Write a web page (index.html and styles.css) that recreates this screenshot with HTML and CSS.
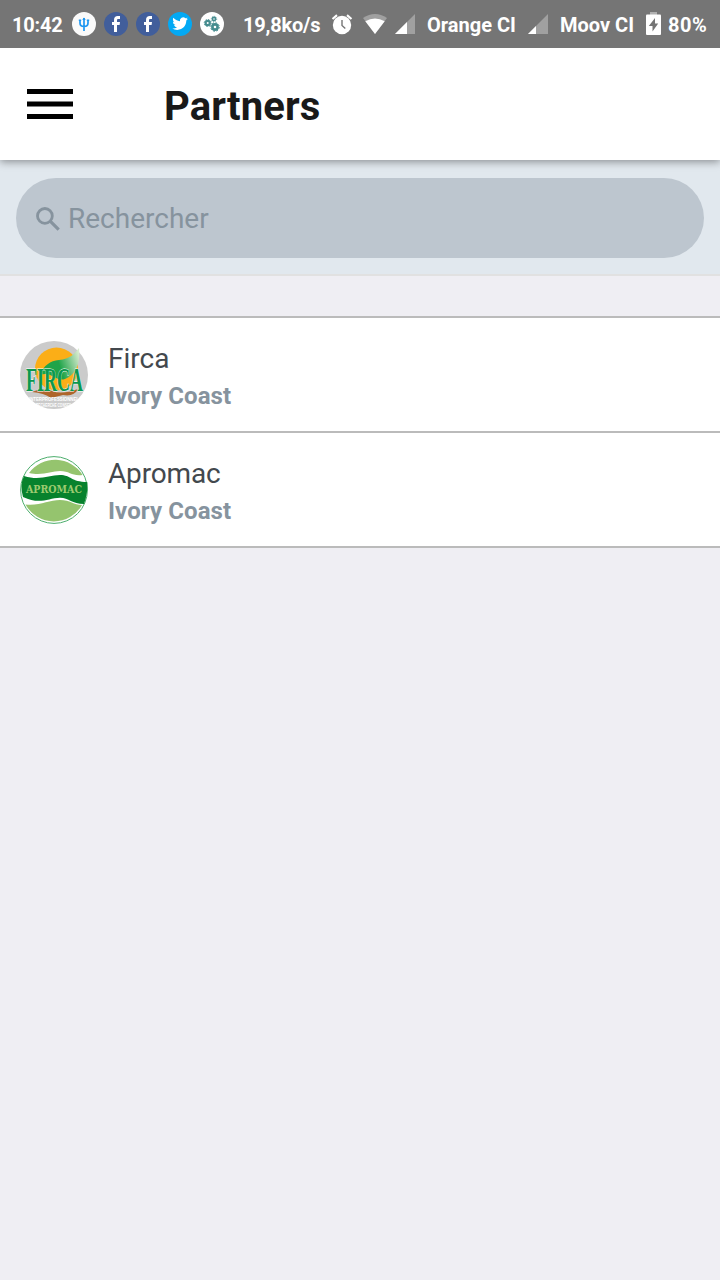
FILE: index.html
```html
<!DOCTYPE html>
<html lang="en">
<head>
<meta charset="utf-8">
<title>Partners</title>
<link rel="stylesheet" href="styles.css">
</head>
<body>
<div class="status">
  <span class="clock">10:42</span>
  <div class="notifications">
    <svg width="24" height="24" viewBox="0 0 24 24"><circle cx="12" cy="12" r="12" fill="#fafafa"/><path d="M12 6v13M8 8v3q0 3.500 4 3.500t4-3.500V8" fill="none" stroke="#1e96f0" stroke-width="1.700"/><path d="M10.300 8 12 5.500 13.700 8zM6.800 7.500h2.400v1.500H6.800zM14.800 7.500h2.400v1.500h-2.400z" fill="#1e96f0"/></svg>
    <svg width="24" height="24" viewBox="0 0 24 24"><circle cx="12" cy="12" r="12" fill="#415e9b"/><path d="M10 20v-7H8v-3h2V8.200C10 5.200 11.400 4 13.800 4H16v3h-1.500C13.400 7 13 7.400 13 8.400V10h3l-.4 3H13v7z" fill="#fff"/></svg>
    <svg width="24" height="24" viewBox="0 0 24 24"><circle cx="12" cy="12" r="12" fill="#415e9b"/><path d="M10 20v-7H8v-3h2V8.200C10 5.200 11.400 4 13.800 4H16v3h-1.500C13.400 7 13 7.400 13 8.400V10h3l-.4 3H13v7z" fill="#fff"/></svg>
    <svg width="24" height="24" viewBox="0 0 24 24"><circle cx="12" cy="12" r="12" fill="#03a9f4"/><g transform="translate(4.300 3.800) scale(.65)" fill="#fff"><path d="M23.950 4.570a10 10 0 0 1-2.820.780 4.960 4.960 0 0 0 2.160-2.720 9.900 9.900 0 0 1-3.120 1.180 4.920 4.920 0 0 0-8.380 4.480C7.690 8.100 4.070 6.130 1.640 3.160a4.820 4.820 0 0 0-.67 2.480c0 1.710.87 3.210 2.190 4.100a4.900 4.900 0 0 1-2.230-.62v.06a4.920 4.920 0 0 0 3.950 4.830 4.990 4.990 0 0 1-2.210.08 4.940 4.940 0 0 0 4.600 3.420A9.870 9.870 0 0 1 0 19.540a14 14 0 0 0 7.550 2.210c9.050 0 14-7.500 14-13.980 0-.21 0-.42-.02-.63a9.940 9.940 0 0 0 2.420-2.570z"/></g></svg>
    <svg width="24" height="24" viewBox="0 0 24 24"><circle cx="12" cy="12" r="12" fill="#fff"/><g fill="none" stroke="#468c8f"><circle cx="7.700" cy="11" r="2.100" stroke-width="2.200"/><circle cx="7.700" cy="11" r="3.500" stroke-width="1" stroke-dasharray="1.370 1.370"/><circle cx="14" cy="7" r="1.600" stroke-width="1.600"/><circle cx="14" cy="7" r="2.700" stroke-width=".8" stroke-dasharray="1.060 1.060"/><circle cx="15" cy="15" r="2.600" stroke-width="2.600"/><circle cx="15" cy="15" r="4.300" stroke-width="1" stroke-dasharray="1.690 1.690"/></g></svg>
  </div>
  <span class="speed">19,8ko/s</span>
  <svg class="alarm" width="22" height="22" viewBox="0 0 22 22"><circle cx="11" cy="12" r="9.200" fill="#fff"/><path d="M1.500 6 6 2.200M16 2.200 20.500 6" stroke="#fff" stroke-width="2.200"/><path d="M11 7v5.400l3.300 3" fill="none" stroke="#757575" stroke-width="1.400"/></svg>
  <svg class="wifi" width="24" height="20" viewBox="0 0 24 20"><path d="M0 4Q12-4 24 4L12 20z" fill="#a0a0a0"/><path d="M2.300 7.200Q12 1.700 21.700 7.200L12 20z" fill="#fff"/></svg>
  <svg class="signal" width="20" height="20" viewBox="0 0 20 20"><path d="M20 0v20H0z" fill="#a0a0a0"/><path d="M12 8v12H0z" fill="#fff"/></svg>
  <span class="carrier orange">Orange CI</span>
  <svg class="signal" width="20" height="20" viewBox="0 0 20 20"><path d="M20 0v20H0z" fill="#a0a0a0"/><path d="M8 12v8H0z" fill="#fff"/></svg>
  <span class="carrier moov">Moov CI</span>
  <svg class="battery" width="15" height="23" viewBox="0 0 15 23"><path d="M4 0h7v3H4z" fill="#b0b0b0"/><rect y="2.500" width="15" height="20.500" rx="1" fill="#fff"/><path d="M9 6 2.800 14h3.700v5.500L12.200 11.500H9z" fill="#757575"/></svg>
  <span class="percent">80%</span>
</div>
<header class="toolbar">
  <svg width="46" height="30" viewBox="0 0 46 30"><path d="M0 0h46v5H0zM0 12.500h46v5H0zM0 25h46v5H0z"/></svg>
  <h1>Partners</h1>
</header>
<div class="searchbar">
  <div class="field">
    <svg width="24" height="24" viewBox="0 0 24 24"><circle cx="8.900" cy="8.900" r="7.400" fill="none" stroke="#86939e" stroke-width="2.800"/><path d="m14.200 14.200 8.500 8.500" stroke="#86939e" stroke-width="3.200"/></svg>
    <span>Rechercher</span>
  </div>
</div>
<main class="list">
  <div class="row">
    <svg width="68" height="68" viewBox="0 0 68 68">
      <defs>
        <linearGradient id="leaf" gradientUnits="userSpaceOnUse" x1="18" y1="30" x2="60" y2="16"><stop offset=".5" stop-color="#20a449"/><stop offset="1" stop-color="#d8ebcf"/></linearGradient>
      </defs>
      <circle cx="34" cy="34" r="34" fill="#cbcbcb"/>
      <circle cx="36.500" cy="28" r="21.500" fill="#fbae17"/>
      <path d="M20 34C24 24 30 20 39 19 50 18 54 13 59 7c2 16-4 27-14 31-10 3-13-8-25-4z" fill="url(#leaf)"/>
      <path d="M12 51q10-5 20-1t26-2q-4 8-15 6l-12 3q-7-5-19-6z" fill="#ae652b"/>
      <text class="firca" x="6" y="49.500" textLength="57" lengthAdjust="spacingAndGlyphs">FIRCA</text>
      <text class="tiny" x="9" y="60" textLength="50" lengthAdjust="spacingAndGlyphs">INTERPROFESSIONNEL</text>
      <text class="tiny" x="16" y="65.500" textLength="36" lengthAdjust="spacingAndGlyphs">RECHERCHE CONSEIL</text>
    </svg>
    <div class="info"><span class="name">Firca</span><span class="country">Ivory Coast</span></div>
  </div>
  <div class="row">
    <svg width="68" height="68" viewBox="0 0 68 68">
      <circle cx="34" cy="34" r="33.400" fill="#fff" stroke="#4cae6c"/>
      <path d="M9 17A32.300 32.300 0 0 1 62.500 19C52 20.500 50 15 40 15 31 15 23 20 9 17zM5.500 48.500C20 50 29 44 40 44c10 0 14 5 22 5A32.300 32.300 0 0 1 5.500 48.500z" fill="#95c46e"/>
      <path d="M4 20C20 25 29 19 40 19c11 0 11 7 27.300 7Q68 37 64 48C52 48 49 41.700 40 41.700 28 42 20 49 3 41Q-.5 29 4 20z" fill="#07822d"/>
      <text class="apromac" x="6" y="37" textLength="56" lengthAdjust="spacingAndGlyphs">APROMAC</text>
    </svg>
    <div class="info"><span class="name apromac-name">Apromac</span><span class="country">Ivory Coast</span></div>
  </div>
</main>
</body>
</html>
```
FILE: styles.css
```css
* { box-sizing: border-box; }
body {
  margin: 0;
  min-height: 1280px;
  background: #efeef3;
  font-family: Roboto, "Liberation Sans", sans-serif;
}
svg { display: block; flex: none; overflow: visible; }

.status {
  position: relative;
  z-index: 1;
  display: flex;
  align-items: center;
  height: 48px;
  padding-left: 12px;
  background: #757575;
  color: #fff;
  font-size: 20px;
  font-weight: 700;
  line-height: 24px;
  white-space: nowrap;
}
.status > span { flex: none; padding-top: 2px; }
.clock { width: 60px; letter-spacing: -.2px; }
.notifications { display: flex; gap: 8px; }
.speed { width: 88px; margin-left: 19px; letter-spacing: -.2px; }
.wifi { margin-left: 10px; }
.signal { margin-left: 8px; }
.carrier { margin-left: 12px; }
.orange { width: 93px; }
.moov { width: 86px; }
.battery { margin-top: -1px; }
.percent { margin-left: 7px; letter-spacing: .5px; }

.toolbar {
  position: relative;
  display: flex;
  align-items: center;
  height: 112px;
  padding-left: 27px;
  background: #fff;
  box-shadow: 0 2px 8px rgba(0, 0, 0, .38);
}
.toolbar h1 {
  margin: 6px 0 0 91px;
  color: #191919;
  font-size: 40px;
  font-weight: 700;
  line-height: 48px;
  letter-spacing: .15px;
}

.searchbar {
  height: 116px;
  padding: 18px 16px 16px;
  background: #e1e8ee;
  border-bottom: 2px solid #e1e1e1;
}
.field {
  display: flex;
  align-items: center;
  height: 80px;
  padding-left: 20px;
  border-radius: 40px;
  background: #bdc6cf;
  color: #86939e;
  font-size: 28px;
}
.field svg { margin-top: 1px; }
.field span { margin-left: 8px; }

.list {
  margin-top: 40px;
  border-top: 2px solid #bbb;
}
.row {
  display: flex;
  align-items: center;
  height: 115px;
  padding-left: 20px;
  border-bottom: 2px solid #bbb;
  background: #fff;
}
.info {
  display: flex;
  flex-direction: column;
  margin: 4px 0 0 20px;
}
.name {
  color: #43484d;
  font-size: 28px;
  line-height: 38px;
}
.apromac-name { letter-spacing: -.15px; }
.country {
  color: #86939e;
  font-size: 24px;
  font-weight: 700;
  line-height: 36px;
  letter-spacing: .1px;
}
.firca {
  font: bold 34px "Liberation Serif", serif;
  fill: #0b9850;
  stroke: #fff;
  stroke-width: .8px;
  paint-order: stroke;
}
.tiny {
  font: bold 5px "Liberation Sans", sans-serif;
  fill: #fff;
}
.apromac {
  font: bold 11.5px "DejaVu Serif", serif;
  fill: #9bca70;
}
```
